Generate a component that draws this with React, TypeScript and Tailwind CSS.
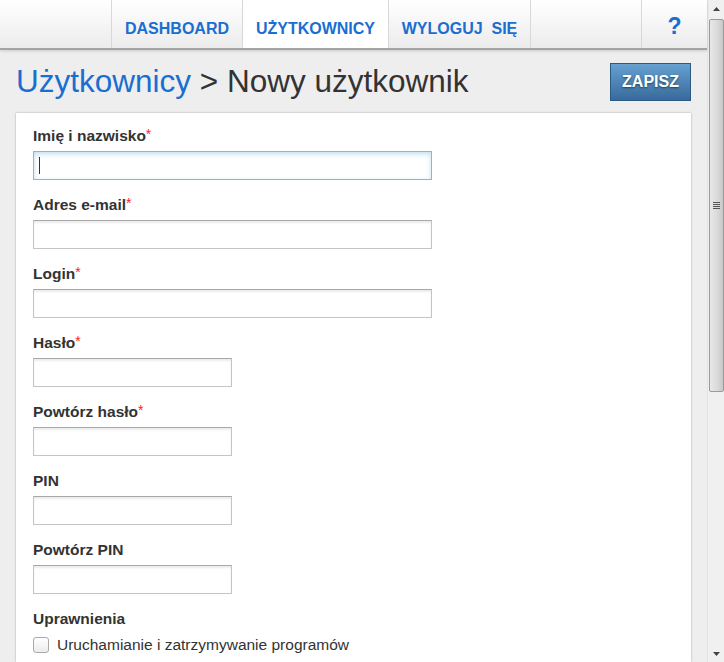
import React from 'react';

const navItems = [
  { label: 'DASHBOARD', width: 'w-[131px]', active: false },
  { label: 'UŻYTKOWNICY', width: 'w-[146px]', active: true },
  { label: 'WYLOGUJ  SIĘ', width: 'w-[142px]', active: false },
];

const fields = [
  { label: 'Imię i nazwisko', required: true, wide: true, focused: true },
  { label: 'Adres e-mail', required: true, wide: true },
  { label: 'Login', required: true, wide: true },
  { label: 'Hasło', required: true, wide: false },
  { label: 'Powtórz hasło', required: true, wide: false },
  { label: 'PIN', required: false, wide: false },
  { label: 'Powtórz PIN', required: false, wide: false },
];

const Field: React.FC<{ label: string; required: boolean; wide: boolean; focused?: boolean }> = ({ label, required, wide, focused }) => (
  <div className="mb-[16px]">
    <div className="text-[15.5px] leading-[18px] font-bold text-[#333]">
      {label}
      {required && <span className="text-[#ff2020] font-normal text-[14px] relative -top-[2px]">*</span>}
    </div>
    <div
      className={
        'mt-[6px] h-[29px] bg-white border ' +
        (wide ? 'w-[399px] ' : 'w-[199px] ') +
        (focused
          ? 'border-[#8eb4da] shadow-[inset_0_2px_5px_rgba(120,180,220,0.45)] flex items-center pl-[5px]'
          : 'border-[#c4c4c4] border-t-[#a8a8a8] shadow-[inset_0_2px_2px_rgba(0,0,0,0.08)]')
      }
    >
      {focused && <div className="w-px h-[17px] bg-[#333]" />}
    </div>
  </div>
);

const Scrollbar: React.FC = () => (
  <div className="w-[17px] h-full bg-[#f0f0f0] border-l border-[#e4e4e4] flex flex-col items-center">
    <div className="h-[17px] w-full flex items-center justify-center">
      <svg width="7" height="4" viewBox="0 0 7 4"><path d="M3.5 0L7 4H0z" fill="#444" /></svg>
    </div>
    <div className="w-[15px] h-[373px] mt-[2px] rounded-[2px] border border-[#9a9a9a] bg-gradient-to-r from-[#e8e8e8] via-[#dcdcdc] to-[#c8c8c8] flex items-center justify-center">
      <div className="flex flex-col gap-[1px]">
        <div className="w-[7px] h-px bg-[#555]" />
        <div className="w-[7px] h-px bg-[#555]" />
        <div className="w-[7px] h-px bg-[#555]" />
        <div className="w-[7px] h-px bg-[#555]" />
      </div>
    </div>
    <div className="flex-1" />
    <div className="h-[17px] w-full flex items-center justify-center">
      <svg width="7" height="4" viewBox="0 0 7 4"><path d="M0 0H7L3.5 4z" fill="#444" /></svg>
    </div>
  </div>
);

export default function App() {
  return (
    <div className="w-[724px] h-[662px] overflow-hidden flex bg-[#eeeeee] font-['Liberation_Sans',Arial,sans-serif]">
      <div className="w-[707px] h-full flex flex-col">
        <div className="h-[50px] shrink-0 flex bg-gradient-to-b from-white to-[#ececec] border-b-2 border-[#a4a4a4] shadow-[0_1px_3px_rgba(0,0,0,0.15)] relative z-10">
          <div className="w-[111px]" />
          {navItems.map((item) => (
            <div
              key={item.label}
              className={
                item.width +
                ' border-l border-[#d8d8d8] flex items-center justify-center pt-[9px] text-[16px] font-bold text-[#1a6ed0] whitespace-pre ' +
                (item.active ? 'bg-white' : '')
              }
            >
              {item.label}
            </div>
          ))}
          <div className="w-[111px] border-l border-[#d8d8d8]" />
          <div className="flex-1 border-l border-[#d8d8d8] flex items-center justify-center pt-[5px] text-[23px] font-bold text-[#1a6ed0]">
            ?
          </div>
        </div>

        <div className="px-[16px] flex-1 flex flex-col">
          <div className="h-[63px] flex items-center justify-between">
            <h1 className="text-[31.5px] leading-none text-[#333] pt-[1px]">
              <span className="text-[#1a6ed0]">Użytkownicy</span> &gt; Nowy użytkownik
            </h1>
            <button className="w-[81px] h-[38px] border border-[#2b5a82] bg-gradient-to-b from-[#66a1d0] to-[#386a9c] text-white font-bold text-[16px] [text-shadow:0_1px_2px_rgba(0,0,0,0.5)]">
              ZAPISZ
            </button>
          </div>

          <div className="flex-1 bg-white shadow-[0_0_2px_rgba(0,0,0,0.3)] pt-[14px] pl-[17px]">
            {fields.map((f) => (
              <Field key={f.label} {...f} />
            ))}
            <div className="text-[15.5px] leading-[18px] font-bold text-[#333]">Uprawnienia</div>
            <div className="mt-[5px] flex items-center gap-[8px]">
              <div className="w-[16px] h-[16px] rounded-[3px] border border-[#aaa] bg-gradient-to-b from-white to-[#ececec]" />
              <span className="text-[15.5px] text-[#333]">Uruchamianie i zatrzymywanie programów</span>
            </div>
          </div>
        </div>
      </div>
      <Scrollbar />
    </div>
  );
}
